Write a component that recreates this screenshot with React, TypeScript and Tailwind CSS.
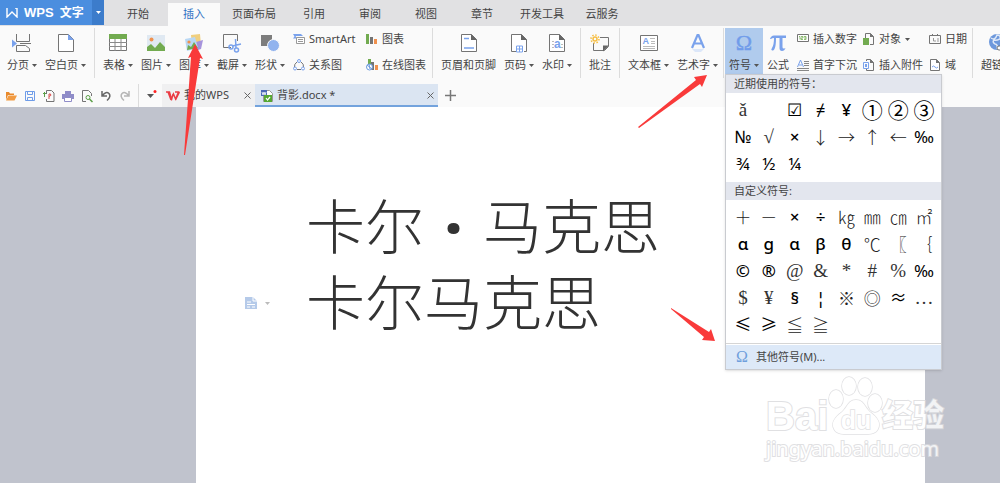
import { useState } from "react";
import type { ReactNode } from "react";
import { clsx } from "clsx";

const GRAY = "#747474";
const BLUE = "#7aa2ec";
const GREEN = "#72ab50";
const ORANGE = "#f0914e";

const TABS = [
  { label: "开始", wide: false },
  { label: "插入", wide: false },
  { label: "页面布局", wide: true },
  { label: "引用", wide: false },
  { label: "审阅", wide: false },
  { label: "视图", wide: false },
  { label: "章节", wide: false },
  { label: "开发工具", wide: true },
  { label: "云服务", wide: false },
];

type Face = "bold" | "sans" | "serif" | "cjk" | "ring";

const FACES: Record<Face, string> = {
  bold: "font-['Noto_Sans','Noto_Sans_CJK_SC',sans-serif] text-[17px] font-medium text-black",
  sans: "font-['Noto_Sans','Noto_Sans_CJK_SC',sans-serif] text-[17px] text-black",
  serif: "font-['Liberation_Serif','Noto_Sans_CJK_SC',serif] text-[19px] text-[#333]",
  cjk: "font-['Noto_Sans_CJK_SC',sans-serif] text-[17px] font-light text-[#222]",
  ring: "font-['Noto_Sans_CJK_SC',sans-serif] text-[21px] text-black",
};

const RECENT: [string, Face][] = [
  ["ǎ", "serif"], ["", "sans"], ["☑", "sans"], ["≠", "sans"], ["¥", "bold"], ["①", "ring"], ["②", "ring"], ["③", "ring"],
  ["№", "sans"], ["√", "serif"], ["×", "bold"], ["↓", "cjk"], ["→", "cjk"], ["↑", "cjk"], ["←", "cjk"], ["‰", "sans"],
  ["¾", "sans"], ["½", "sans"], ["¼", "sans"],
];

const CUSTOM: [string, Face][] = [
  ["＋", "cjk"], ["－", "cjk"], ["×", "bold"], ["÷", "bold"], ["㎏", "cjk"], ["㎜", "cjk"], ["㎝", "cjk"], ["㎡", "cjk"],
  ["ɑ", "bold"], ["ɡ", "bold"], ["α", "bold"], ["β", "bold"], ["θ", "bold"], ["℃", "cjk"], ["〖", "cjk"], ["｛", "cjk"],
  ["©", "bold"], ["®", "bold"], ["@", "serif"], ["&", "serif"], ["*", "serif"], ["#", "serif"], ["%", "serif"], ["‰", "sans"],
  ["$", "serif"], ["¥", "serif"], ["§", "bold"], ["¦", "bold"], ["※", "cjk"], ["◎", "cjk"], ["≈", "sans"], ["…", "serif"],
  ["≤", "sans"], ["≥", "sans"], ["≦", "cjk"], ["≧", "cjk"],
];

function Icon({ children, small = false }: { children: ReactNode; small?: boolean }) {
  return (
    <svg
      aria-hidden="true"
      viewBox={small ? "0 0 12 12" : "0 0 20 20"}
      fill="none"
      className={clsx("shrink-0 overflow-visible", small ? "h-3 w-3" : "h-5 w-5")}
    >
      {children}
    </svg>
  );
}

function Caret() {
  return (
    <svg aria-hidden="true" viewBox="0 0 5 3" className="h-[3px] w-[5px] shrink-0 fill-[#555]">
      <path d="M0 0h5L2.5 3z" />
    </svg>
  );
}

function Separator({ tight = false }: { tight?: boolean }) {
  return <div className={clsx("mt-0.5 h-[50px] w-px shrink-0 bg-[#dcdcdc]", tight ? "mx-px" : "mx-1")} />;
}

function BigButton({
  label,
  caret = false,
  active = false,
  onClick,
  children,
}: {
  label: string;
  caret?: boolean;
  active?: boolean;
  onClick?: () => void;
  children: ReactNode;
}) {
  return (
    <button
      type="button"
      onClick={onClick}
      className={clsx("mt-0.5 flex h-[46px] shrink-0 flex-col items-center gap-1 px-1 pt-[5px]", active && "bg-[#b0cbed]")}
    >
      <Icon>{children}</Icon>
      <span className="flex items-center gap-[3px] leading-4 whitespace-nowrap">
        {label}
        {caret && <Caret />}
      </span>
    </button>
  );
}

function SmallButton({ label, caret = false, children }: { label: string; caret?: boolean; children: ReactNode }) {
  return (
    <button type="button" className="flex h-4 items-center gap-1 leading-4 whitespace-nowrap">
      <Icon small>{children}</Icon>
      {label}
      {caret && <Caret />}
    </button>
  );
}

function SmallColumn({ className, children }: { className: string; children: ReactNode }) {
  return <div className={clsx("flex shrink-0 flex-col gap-2.5 pt-[5px] pl-1", className)}>{children}</div>;
}

function PageOutline() {
  return (
    <>
      <path d="M2.500 1.500h10l5 5v12h-15z" fill="#fff" stroke={GRAY} strokeLinejoin="round" />
      <path d="M12 1v6h6z" fill="#666" />
    </>
  );
}

function SymbolGrid({ title, symbols }: { title: string; symbols: [string, Face][] }) {
  return (
    <section>
      <h2 className="h-[18px] bg-[#e3e6ee] pl-2 leading-[18px]">{title}</h2>
      <div className="grid grid-cols-8 px-1 pt-[3px] pb-[5px]">
        {symbols.map(([char, face], i) => (
          <button
            key={i}
            type="button"
            aria-label={char || "空格"}
            className={clsx("flex h-[27px] items-center justify-center leading-none", FACES[face])}
          >
            {char}
          </button>
        ))}
      </div>
    </section>
  );
}

function SymbolMenu() {
  return (
    <div className="absolute top-full left-0 z-20 w-[217px] border border-[#c9cbd0] bg-white shadow-sm">
      <SymbolGrid title="近期使用的符号：" symbols={RECENT} />
      <SymbolGrid title="自定义符号:" symbols={CUSTOM} />
      <div className="border-t border-[#d5d5d5] pt-px">
        <button type="button" className="flex h-6 w-full items-center gap-2 bg-[#dde9f8] pl-2.5">
          <span className="font-['Liberation_Serif',serif] text-base leading-none text-[#6f9fdc]">Ω</span>
          其他符号(M)...
        </button>
      </div>
    </div>
  );
}

function TitleBar() {
  const [active, setActive] = useState("插入");
  return (
    <header className="flex h-[26px] shrink-0 bg-[#e1e1e3]">
      <div className="flex h-[25px] shrink-0 bg-[#4b8edf] text-white">
        <button type="button" className="flex w-[92px] items-center gap-1.5 pl-1.5">
          <svg aria-hidden="true" viewBox="0 0 12 10" fill="none" className="h-2.5 w-3">
            <path d="M1 0v9l5-5 5 5V0H9" stroke="#fff" strokeWidth="1.4" />
          </svg>
          <span className="flex items-center gap-1.5 whitespace-nowrap">
            <span className="font-['Liberation_Sans',sans-serif] text-[13px] font-bold">WPS</span>
            <span className="text-xs font-bold">文字</span>
          </span>
        </button>
        <button type="button" aria-label="应用菜单" className="flex w-3 items-center justify-center bg-[#3c7ccb]">
          <svg aria-hidden="true" viewBox="0 0 5 3" className="h-[3px] w-[5px] fill-white">
            <path d="M0 0h5L2.5 3z" />
          </svg>
        </button>
      </div>
      <nav className="flex items-end pl-1.5">
        {TABS.map((tab) => (
          <button
            key={tab.label}
            type="button"
            onClick={() => setActive(tab.label)}
            className={clsx(
              "h-[23px] shrink-0 whitespace-nowrap",
              tab.wide ? "w-16" : active === tab.label ? "mx-0.5 w-[52px]" : "w-14",
              active === tab.label && "bg-[#fafafa] text-[#2f72c4]"
            )}
          >
            {tab.label}
          </button>
        ))}
      </nav>
    </header>
  );
}

function Ribbon() {
  const [menuOpen, setMenuOpen] = useState(true);
  return (
    <div className="flex h-[58px] shrink-0 bg-[#fafafa] pl-[3px]">
      <BigButton label="分页" caret>
        <path d="M4.500 1v7.500h13V1M4.500 18.500v-6h9l4 3v3zM8 10.500h11" stroke={GRAY} />
        <path d="M0 6.500l5 4-5 4z" fill={BLUE} />
      </BigButton>
      <BigButton label="空白页" caret>
        <path d="M2.500 1.500h10l5 5v12h-15z" fill="#fff" stroke={GRAY} strokeLinejoin="round" />
        <path d="M12 1v6h6z" fill={BLUE} />
      </BigButton>
      <Separator />
      <BigButton label="表格" caret>
        <path d="M1.500 1.500h17v16h-17z" fill="#fff" stroke={GRAY} />
        <path d="M1 1h18v5H1z" fill={GREEN} />
        <path d="M1 9.500h18M1 13.500h18M7 6v12M13 6v12" stroke="#8a8a8a" />
      </BigButton>
      <BigButton label="图片" caret>
        <path d="M1 2h18v16H1z" fill="#e0e9f2" />
        <circle cx="5.500" cy="6.500" r="2" fill={ORANGE} />
        <path d="M1 18v-4l4-3 4 4 5-6 5 5v4z" fill={GREEN} />
      </BigButton>
      <BigButton label="图库" caret>
        <path d="M7 2l9-1 1 11-9 1z" fill="#f0cf7f" />
        <path d="M12 9l7-2-2 9-6 2z" fill="#a693dc" />
        <path d="M1 6l10-2 3 11-11 3z" fill="#b9d8f4" />
        <circle cx="5" cy="9" r="1.600" fill={ORANGE} />
        <path d="M3 17l1-5 3 2 3-5 4 6z" fill={GREEN} />
      </BigButton>
      <BigButton label="截屏" caret>
        <path d="M9 14.500H1.500v-13h14V8" stroke={GRAY} />
        <circle cx="9" cy="14" r="2" stroke={BLUE} strokeWidth="1.500" />
        <circle cx="14.500" cy="17" r="2" stroke={BLUE} strokeWidth="1.500" />
        <path d="M10.500 13l8.500-2M14 15l-.5-9" stroke={BLUE} strokeWidth="1.500" />
      </BigButton>
      <BigButton label="形状" caret>
        <path d="M1 2h11v11H1z" fill="#7d7d7d" />
        <circle cx="13.500" cy="12.500" r="6" fill="#91b3ee" stroke="#fafafa" />
      </BigButton>
      <SmallColumn className="w-[73px]">
        <SmallButton label="SmartArt">
          <path d="M0 1h8l2 2H2.500L4 5.500H0l1.500-2z" fill={BLUE} />
          <path d="M3.500 4.500h8v6h-8zM5 6.500h5M5 8.500h5" stroke="#999" fill="#fff" />
        </SmallButton>
        <SmallButton label="关系图">
          <path d="M4 3Q1 5 1.500 8M8 3q3 2 2.500 5M4 10.500h4" stroke={GRAY} />
          <circle cx="6" cy="2" r="1.500" stroke={BLUE} />
          <circle cx="2" cy="9.500" r="1.500" stroke={BLUE} />
          <circle cx="10" cy="9.500" r="1.500" stroke={BLUE} />
        </SmallButton>
      </SmallColumn>
      <SmallColumn className="w-[66px]">
        <SmallButton label="图表">
          <path d="M0 1h3v10H0z" fill={GREEN} />
          <path d="M4 4h3v7H4z" fill={GRAY} />
          <path d="M8 6h3v5H8z" fill={ORANGE} />
        </SmallButton>
        <SmallButton label="在线图表">
          <path d="M2 0h3v5H2z" fill={GREEN} />
          <path d="M5 3h3v8H5z" fill={GRAY} />
          <path d="M9 6h3v5H9z" fill={ORANGE} />
          <circle cx="3.500" cy="8" r="3" stroke="#6b9ade" fill="#fff" />
          <path d="M1 6l5 4M3 5l1 5" stroke="#6b9ade" />
        </SmallButton>
      </SmallColumn>
      <Separator />
      <BigButton label="页眉和页脚">
        <PageOutline />
        <path d="M5 5.500h5M5 15h10" stroke={BLUE} strokeWidth="1.500" />
      </BigButton>
      <BigButton label="页码" caret>
        <PageOutline />
        <path d="M7 12h8v8H7z" fill="#fff" />
        <path d="M7.500 13h6v6h-6zM10.500 13v6M7.500 16h6" stroke={BLUE} />
      </BigButton>
      <BigButton label="水印" caret>
        <PageOutline />
        <path d="M5 8.500h2M5 11.500h2M5 14.500h2M14 11.500h2M14 14.500h2" stroke="#bbb" />
        <text x="7" y="15" fontSize="12" fontWeight="bold" fill={BLUE} fontFamily="Liberation Sans">
          a
        </text>
      </BigButton>
      <Separator />
      <BigButton label="批注">
        <path d="M10 4.500h8.500v9l-4 4H3.500V10" stroke={GRAY} />
        <path d="M13 12.500h6l-6 6z" fill="#666" />
        <circle cx="5" cy="6" r="2" stroke="#f6be43" strokeWidth="1.500" />
        <circle cx="5" cy="6" r="4" stroke="#f6be43" strokeWidth="1.500" strokeDasharray="1.500 1.600" />
      </BigButton>
      <Separator />
      <BigButton label="文本框" caret>
        <path d="M1.500 2.500h17v15h-17z" fill="#fff" stroke={GRAY} />
        <text x="3.500" y="11" fontSize="9" fontWeight="bold" fill={BLUE} fontFamily="Liberation Sans">
          A
        </text>
        <path d="M11 5.500h5M12 8.500h4M12 10.500h4M4 13.500h12M4 15.500h12" stroke="#bbb" />
      </BigButton>
      <BigButton label="艺术字" caret>
        <path d="M4 15L9.500 2h1L16 15M6 10.500h8" stroke={BLUE} strokeWidth="2.200" />
        <path d="M4 16h12l-3 3H7z" fill="#dce7f9" />
      </BigButton>
      <Separator tight />
      <div className="relative h-12 shrink-0">
        <BigButton label="符号" caret active={menuOpen} onClick={() => setMenuOpen(!menuOpen)}>
          <text x="10" y="17" textAnchor="middle" fontSize="22" fill="#709cea" stroke="#709cea" strokeWidth=".4" fontFamily="Liberation Serif">
            Ω
          </text>
        </BigButton>
        {menuOpen && <SymbolMenu />}
      </div>
      <BigButton label="公式">
        <path
          d="M2 6Q3 2.500 6 2.500h12v2.500H14.500v9q0 2.500 3 1-1 3-3.500 3-2.500 0-2.500-3V5H8q0 8-1.500 11-1 2-2.500 1.500-1.500-1 0-2.500Q6 12 6 5q-2 0-3 1z"
          fill={BLUE}
        />
      </BigButton>
      <SmallColumn className="w-[66px]">
        <SmallButton label="插入数字">
          <path d="M.500 1.500h11v7H.500z" stroke={GRAY} fill="#fff" />
          <path d="M2 3.500h1v3m1-3h2v1.500H4v1.500h2m1-3h2v3H7m0-1.500h2" stroke={GREEN} strokeWidth=".8" />
        </SmallButton>
        <SmallButton label="首字下沉">
          <path d="M.500 8l3-7 3 7M2 6h3" stroke={BLUE} />
          <path d="M7 2.500h5M7 4.500h5M7 6.500h5M0 9.500h12M0 11.500h12" stroke="#888" />
        </SmallButton>
      </SmallColumn>
      <SmallColumn className="w-[66px]">
        <SmallButton label="对象" caret>
          <path d="M2.500 5V.500h5l3 3v8H7" stroke={GRAY} />
          <path d="M7 0v4h4z" fill={GRAY} />
          <path d="M0 5h6v7H0z" fill={GREEN} />
        </SmallButton>
        <SmallButton label="插入附件">
          <path d="M3.500 2V.500h4l3 3v8h-7V10" stroke={GRAY} />
          <path d="M7 0v4h4z" fill={GRAY} />
          <path d="M.500 3.500h5v6h-5z" stroke={BLUE} />
          <path d="M2 5h2v3H2z" fill={BLUE} />
        </SmallButton>
      </SmallColumn>
      <SmallColumn className="w-[43px]">
        <SmallButton label="日期">
          <path d="M.500 2.500h11v8H.500zM3.500 1v2M8.500 1v2" stroke={GRAY} />
          <path d="M4.500 5v3H7M9 5v4" stroke="#999" />
        </SmallButton>
        <SmallButton label="域">
          <path d="M1.500.500h6l3 3v8h-9z" stroke={GRAY} fill="#fff" />
          <path d="M7 0v4h4z" fill={GRAY} />
          <path d="M3 8q1.500-2 3 0t3 0" stroke={BLUE} />
        </SmallButton>
      </SmallColumn>
      <Separator />
      <BigButton label="超链接" caret>
        <circle cx="5" cy="9" r="8" fill="#6d98dc" />
        <path d="M-1 5q4 3 6-3 4 0 3 4-4 2-6 1-2 2 1 4 3 0 2 5M10 4q-2 6 3 8" stroke="#dfe9f8" strokeWidth="1.500" />
        <rect x="5" y="13" width="9" height="4" rx="2" fill="#fff" stroke={GRAY} />
      </BigButton>
    </div>
  );
}

function QuickButton({ label, children }: { label: string; children: ReactNode }) {
  return (
    <button type="button" aria-label={label} className="flex w-[19px] shrink-0 items-center justify-center">
      <Icon small>{children}</Icon>
    </button>
  );
}

function CloseButton() {
  return (
    <button type="button" aria-label="关闭" className="ml-auto">
      <svg aria-hidden="true" viewBox="0 0 7 7" className="h-[7px] w-[7px]">
        <path d="M.5.5l6 6M6.500.5l-6 6" stroke="#666" />
      </svg>
    </button>
  );
}

function DocumentBar() {
  return (
    <div className="flex h-[23px] shrink-0 bg-[#fafafa] pl-px">
      <QuickButton label="打开">
        <path d="M1 10V2h3l1 1.500h4V5H3z" fill="#e98a2c" />
        <path d="M3.500 5.500H12L9.500 10.500H1z" fill="#f29b42" />
      </QuickButton>
      <QuickButton label="保存">
        <path d="M1.500 1.500h9v9h-9zM3.500 1.500v3h5v-3M3.500 10.500v-3h5v3" stroke="#6f9ce8" />
      </QuickButton>
      <QuickButton label="输出为PDF">
        <path d="M3.500 4V.500h5l2.500 2.500v8.500H3.500V9" stroke={GRAY} />
        <path d="M6 9V4h1.500q1.500 1.500-1.500 2.500" stroke="#d94f4f" />
        <path d="M0 3.500h3M1.500 2v5" stroke="#5a9e46" />
      </QuickButton>
      <QuickButton label="打印">
        <path d="M3 1h6v3H3zM0 4h12v5H0z" fill="#8f8cc8" />
        <path d="M2.500 7.500h7v4h-7z" fill="#fff" stroke="#8f8cc8" />
      </QuickButton>
      <QuickButton label="打印预览">
        <path d="M5 11.500H1.500V.500h6l3 3V6" stroke={GRAY} />
        <circle cx="7" cy="7.500" r="2" stroke="#5a9e46" />
        <path d="M8.500 9l3 3" stroke="#5a9e46" strokeWidth="1.500" />
      </QuickButton>
      <QuickButton label="撤销">
        <path d="M2 1v5h5M2.500 5.500Q6 1 9 3.500q2.500 3-2 7" stroke="#666" strokeWidth="1.500" />
      </QuickButton>
      <QuickButton label="恢复">
        <path d="M10 1v5H5M9.500 5.500Q6 1 3 3.500q-2.500 3 2 7" stroke="#b5b5b5" strokeWidth="1.500" />
      </QuickButton>
      <div className="ml-1 h-[23px] w-px shrink-0 bg-[#dcdcdc]" />
      <button type="button" aria-label="自定义快速访问工具栏" className="flex w-[23px] shrink-0 items-center justify-center">
        <svg aria-hidden="true" viewBox="0 0 12 12" className="h-3 w-3">
          <path d="M2 4h7L5.500 8z" fill="#555" />
          <circle cx="10" cy="1.500" r="1.500" fill="#f22" />
        </svg>
      </button>
      <div className="flex w-[93px] shrink-0 items-center gap-1 bg-[#f0f0f1] pr-1 pl-1">
        <svg aria-hidden="true" viewBox="0 0 14 10" fill="none" className="h-2.5 w-3.5">
          <path d="M0 1h3.500l2 7L7.500 3 9.500 8l3-7H9M2 1l3 8M7 3L5.500 9M9.500 9l4-8" stroke="#ea3b43" strokeWidth="1.400" />
        </svg>
        <span>我的WPS</span>
        <CloseButton />
      </div>
      <div className="flex w-[183px] shrink-0 items-center gap-1 border-b-2 border-[#73a3dd] bg-[#dbe5f2] pt-0.5 pr-1 pl-1.5">
        <Icon small>
          <path d="M2.500.500h6l3 3v8h-9z" fill="#fff" stroke="#999" />
          <path d="M0 0h6v6H0z" fill="#4c68b8" />
          <path d="M1 2l1 3 1-3 1 3 1-3" stroke="#fff" strokeWidth=".8" />
          <path d="M3 5h8v7H3z" fill="#56a832" />
          <path d="M5 8l1.500 2L9 7" stroke="#fff" strokeWidth="1.200" />
        </Icon>
        <span>背影.docx *</span>
        <CloseButton />
      </div>
      <button type="button" aria-label="新建" className="flex w-[25px] shrink-0 items-center justify-center">
        <svg aria-hidden="true" viewBox="0 0 11 11" className="h-[11px] w-[11px]">
          <path d="M5.500 0v11M0 5.500h11" stroke="#777" strokeWidth="1.500" />
        </svg>
      </button>
    </div>
  );
}

function Watermark() {
  return (
    <div
      aria-hidden="true"
      className="absolute top-[268px] left-[766px] font-['Noto_Sans','Noto_Sans_CJK_SC',sans-serif] whitespace-nowrap text-white opacity-80 [-webkit-text-stroke:2px_#d9d9dc] [paint-order:stroke_fill]"
    >
      <div className="flex items-end">
        <span className="w-16 font-['Liberation_Sans',sans-serif] text-[40px] leading-[38px] font-bold">Bai</span>
        <svg viewBox="0 0 52 60" className="h-[60px] w-[52px] overflow-visible" fill="#fff" stroke="#d9d9dc" strokeWidth="1.500">
          <ellipse cx="6" cy="24" rx="7" ry="9" />
          <ellipse cx="19" cy="11" rx="7" ry="9" />
          <ellipse cx="35" cy="12" rx="7" ry="9" />
          <ellipse cx="45" cy="28" rx="7" ry="9" />
          <path d="M26 25c8 0 9 8 14 12 8 6 11 11 8 17-3 6-10 5-22 5s-19 1-22-5c-3-6 0-11 8-17 5-4 6-12 14-12z" />
          <text x="26" y="54" textAnchor="middle" fontSize="25" fontWeight="bold" fontFamily="Liberation Sans" strokeWidth="1.500">
            du
          </text>
        </svg>
        <span className="text-[31px] leading-[42px] font-bold">经验</span>
      </div>
      <div className="text-xl leading-7">jingyan.baidu.com</div>
    </div>
  );
}

function DocumentArea() {
  return (
    <main className="relative flex flex-1 overflow-hidden bg-[#c0c3cd]">
      <article className="mr-[75px] ml-[196px] flex-1 bg-white pt-[81px]">
        <div className="flex">
          <div className="flex w-[110px] shrink-0 items-end pb-[31px] pl-[49px]">
            <button type="button" aria-label="段落布局" className="flex items-center gap-2">
              <Icon small>
                <path d="M0 0h8l4 4v8H0z" fill="#b5cae9" />
                <path d="M8 0v4h4M2 5h4M2 7.500h8M2 10h3M7 10h3" stroke="#fff" />
              </Icon>
              <svg aria-hidden="true" viewBox="0 0 5 3" className="h-[3px] w-[5px] fill-[#bbb]">
                <path d="M0 0h5L2.500 3z" />
              </svg>
            </button>
          </div>
          <div className="text-[59px] leading-[76px] font-light whitespace-nowrap text-[#333]">
            <p className="flex">
              卡尔<span className="w-[59px] text-center font-black">·</span>马克思
            </p>
            <p>卡尔马克思</p>
          </div>
        </div>
      </article>
      <Watermark />
    </main>
  );
}

function PointerArrows() {
  return (
    <svg
      aria-hidden="true"
      viewBox="0 0 1000 483"
      className="pointer-events-none absolute top-0 left-0 z-30 h-[483px] w-[1000px]"
      fill="#f93a3a"
    >
      <path d="M195 44l8 15-3-1-15 97h-1l7-98-3 1z" />
      <path d="M707 75l-5 12-2-3-61 44-1-1 58-47-2-3z" />
      <path d="M715 341l-13-1 2-3-33-28v-1l38 24 2-3z" />
    </svg>
  );
}

export default function App() {
  return (
    <div className="relative flex min-h-screen flex-col overflow-hidden font-['Noto_Sans','Noto_Sans_CJK_SC',sans-serif] text-[11px] text-[#444]">
      <TitleBar />
      <Ribbon />
      <DocumentBar />
      <DocumentArea />
      <PointerArrows />
    </div>
  );
}
